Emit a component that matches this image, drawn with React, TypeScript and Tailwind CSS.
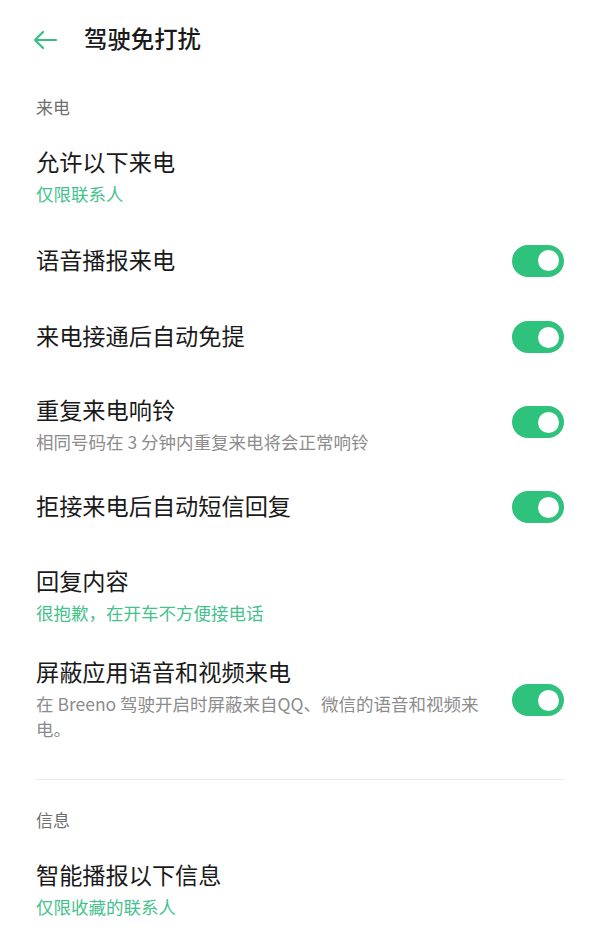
import React from "react";

const font = {
  fontFamily: '"Noto Sans CJK SC", "Noto Sans", sans-serif',
};

function Toggle() {
  return (
    <div className="flex h-[32px] w-[52px] shrink-0 items-center justify-end rounded-full bg-[#2fc27c] pr-[5px]">
      <div className="h-[21px] w-[21px] rounded-full bg-white" />
    </div>
  );
}

function Row({
  title,
  sub,
  subColor = "green",
  toggle,
  className,
  textClass = "",
}: {
  title: string;
  sub?: string;
  subColor?: "green" | "gray";
  toggle?: boolean;
  className: string;
  textClass?: string;
}) {
  return (
    <div className={`flex items-center justify-between px-[36px] ${className}`}>
      <div className={`flex flex-col pb-[4px] ${textClass}`}>
        <div className="text-[23.2px] leading-[32px] text-[#1a1a1a]">{title}</div>
        {sub && (
          <div
            className={`text-[17.5px] leading-[25px] mt-[4px] ${
              subColor === "green" ? "text-[#45c28c]" : "text-[#8c8c8c]"
            }`}
          >
            {sub}
          </div>
        )}
      </div>
      {toggle && <Toggle />}
    </div>
  );
}

export default function App() {
  return (
    <div className="w-[600px] h-[943px] overflow-hidden bg-white" style={font}>
      <div className="flex h-[82px] items-center px-[32px]">
        <svg width="26" height="22" viewBox="0 0 26 22" fill="none" className="mt-[-2px]">
          <path
            d="M24 11H3M11 3L3 11L11 19"
            stroke="#33c07e"
            strokeWidth="2.2"
            strokeLinecap="round"
            strokeLinejoin="round"
          />
        </svg>
        <div className="ml-[26px] pb-[4px] text-[23.4px] font-medium text-[#1a1a1a]">驾驶免打扰</div>
      </div>

      <div className="flex h-[50px] items-center px-[36px] text-[17px] text-[#6e6e6e]">来电</div>

      <Row className="h-[90px]" title="允许以下来电" sub="仅限联系人" />
      <Row className="h-[77px]" title="语音播报来电" toggle />
      <Row className="h-[76px]" title="来电接通后自动免提" toggle />
      <Row
        className="h-[94px]"
        textClass="mt-[6px]"
        title="重复来电响铃"
        sub="相同号码在 3 分钟内重复来电将会正常响铃"
        subColor="gray"
        toggle
      />
      <Row className="h-[76px]" title="拒接来电后自动短信回复" toggle />
      <Row className="h-[102px]" title="回复内容" sub="很抱歉，在开车不方便接电话" />
      <Row
        className="h-[106px]"
        textClass="max-w-[455px]"
        title="屏蔽应用语音和视频来电"
        sub="在 Breeno 驾驶开启时屏蔽来自QQ、微信的语音和视频来电。"
        subColor="gray"
        toggle
      />

      <div className="mx-[36px] mt-[26px] h-px bg-[#ebebeb]" />

      <div className="flex h-[80px] items-center px-[36px] text-[17px] text-[#6e6e6e]">信息</div>

      <div className="mt-[-2px] px-[36px]">
        <div className="text-[23.2px] leading-[32px] text-[#1a1a1a]">智能播报以下信息</div>
        <div className="mt-[4px] text-[17.5px] leading-[25px] text-[#45c28c]">仅限收藏的联系人</div>
      </div>
    </div>
  );
}
